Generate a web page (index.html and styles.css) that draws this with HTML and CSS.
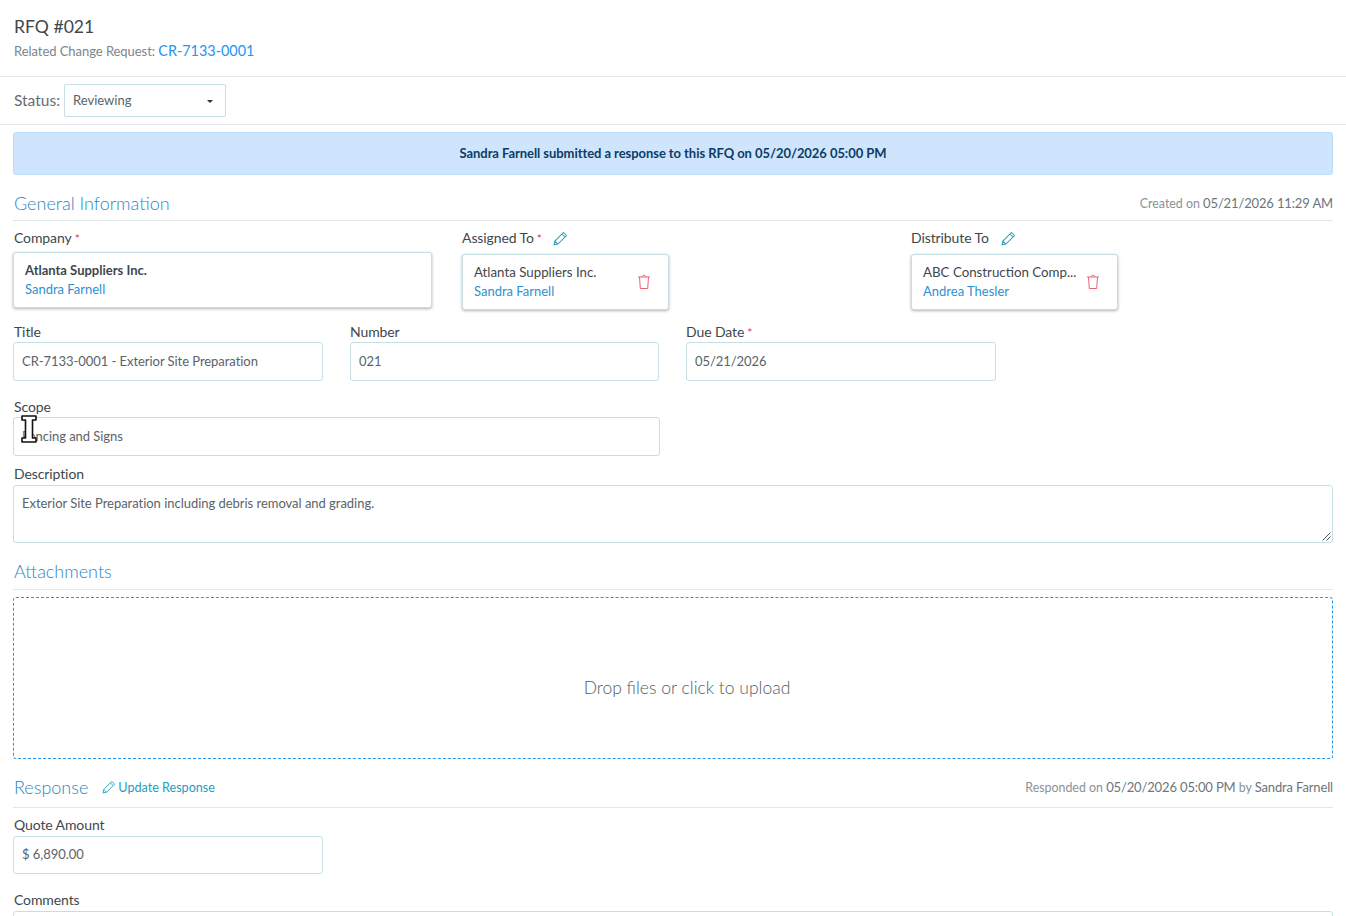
FILE: index.html
```html
<!DOCTYPE html>
<html>
    <head>
        <title>RFQ #021</title>
        <link rel="stylesheet" href="styles.css">
    </head>
    <body>
        <header class='page-head'>
            <h1>RFQ #021</h1>
            <p class='related'>Related Change Request: <a href='#'>CR-7133-0001</a></p>
        </header>
        <div class='status-bar'>
            <label>Status:</label>
            <div class='select'>
                <span>Reviewing</span>
                <i class='caret'></i>
            </div>
        </div>
        <div class='wrapper'>
            <div class='banner'>Sandra Farnell submitted a response to this RFQ on 05/20/2026 05:00 PM</div>

            <div class='section-head general'>
                <h2>General Information</h2>
                <div class='meta'>Created on <b>05/21/2026 11:29 AM</b></div>
            </div>

            <div class='people'>
                <div class='people-col'>
                    <div class='label first'>Company<em>*</em></div>
                    <div class='card card-wide'>
                        <div class='card-text'>
                            <strong>Atlanta Suppliers Inc.</strong>
                            <a href='#'>Sandra Farnell</a>
                        </div>
                    </div>
                </div>
                <div class='people-col'>
                    <div class='label'>Assigned To<em>*</em>
                        <svg class='pencil' viewBox='0 0 16 16'><path d='M11.2 1.6l3.2 3.2-9.2 9.2-4 .8.8-4zM9.6 3.2l3.2 3.2M2 10.8l3.2 3.2'/></svg>
                    </div>
                    <div class='card card-small'>
                        <div class='card-text'>
                            <span class='name'>Atlanta Suppliers Inc.</span>
                            <a href='#'>Sandra Farnell</a>
                        </div>
                        <svg class='trash' viewBox='0 0 14 16'><path d='M1 3h12M5 3c0-2.200 4-2.200 4 0M2.500 3l.8 11.500h7.400l.8-11.500'/></svg>
                    </div>
                </div>
                <div class='people-col'>
                    <div class='label'>Distribute To
                        <svg class='pencil gap' viewBox='0 0 16 16'><path d='M11.2 1.6l3.2 3.2-9.2 9.2-4 .8.8-4zM9.6 3.2l3.2 3.2M2 10.8l3.2 3.2'/></svg>
                    </div>
                    <div class='card card-small'>
                        <div class='card-text'>
                            <span class='name'>ABC Construction Comp...</span>
                            <a href='#'>Andrea Thesler</a>
                        </div>
                        <svg class='trash' viewBox='0 0 14 16'><path d='M1 3h12M5 3c0-2.200 4-2.200 4 0M2.500 3l.8 11.500h7.400l.8-11.500'/></svg>
                    </div>
                </div>
            </div>

            <div class='row3'>
                <div>
                    <div class='label first'>Title</div>
                    <div class='input'>CR-7133-0001 - Exterior Site Preparation</div>
                </div>
                <div>
                    <div class='label'>Number</div>
                    <div class='input'>021</div>
                </div>
                <div>
                    <div class='label'>Due Date<em>*</em></div>
                    <div class='input'>05/21/2026</div>
                </div>
            </div>

            <div class='scope'>
                <div class='label first'>Scope</div>
                <div class='input'>Fencing and Signs</div>
                <svg class='ibeam' viewBox='0 0 16 28'><path d='M1 1h14v4h-3.500v18H15v4H1v-4h3.500V5H1z'/></svg>
            </div>

            <div class='desc'>
                <div class='label first'>Description</div>
                <div class='textarea'>Exterior Site Preparation including debris removal and grading.
                    <svg class='grip' viewBox='0 0 9 9'><path d='M8.500 .5l-8 8M8.500 4.500l-4 4'/></svg>
                </div>
            </div>

            <div class='section-head attach'>
                <h2>Attachments</h2>
            </div>
            <div class='dropzone'>Drop files or click to upload</div>

            <div class='section-head response'>
                <div class='head-left'>
                    <h2>Response</h2>
                    <a href='#' class='update'>
                        <svg viewBox='0 0 16 16'><path d='M11.2 1.6l3.2 3.2-9.2 9.2-4 .8.8-4zM9.6 3.2l3.2 3.2M2 10.8l3.2 3.2'/></svg>
                        Update Response
                    </a>
                </div>
                <div class='meta'>Responded on <b>05/20/2026 05:00 PM</b> by <b>Sandra Farnell</b></div>
            </div>

            <div class='quote'>
                <div class='label first'>Quote Amount</div>
                <div class='input'>$ 6,890.00</div>
            </div>
            <div class='comments'>
                <div class='label first'>Comments</div>
                <div class='textarea'></div>
            </div>
        </div>
    </body>
</html>
```

FILE: styles.css
```css
body{
    margin: 0;
    height: 916px;
    overflow: hidden;
    background-color: #fff;
    font-family: Lato, sans-serif;
    font-size: 13px;
    color: #3f474d;
}
a{
    text-decoration: none;
    color: #2f8fcf;
}
.page-head{
    height: 77px;
    box-sizing: border-box;
    padding: 15px 14px 0;
    border-bottom: 1px solid #e2e8e8;
}
.page-head h1{
    margin: 0;
    font-size: 17.6px;
    line-height: 24px;
    font-weight: 400;
    color: #40474c;
}
.related{
    margin: 3px 0 0;
    font-size: 13px;
    letter-spacing: -.05px;
    line-height: 18px;
    color: #7d858b;
}
.related a{
    font-size: 14.4px;
    letter-spacing: 0;
    color: #2196f3;
}
.status-bar{
    display: flex;
    align-items: center;
    height: 48px;
    box-sizing: border-box;
    padding: 0 14px;
    border-bottom: 1px solid #e2e8e8;
}
.status-bar label{
    font-size: 15.5px;
    color: #646c72;
    margin-right: 4px;
    margin-top: -2px;
}
.select{
    width: 162px;
    height: 33px;
    box-sizing: border-box;
    border: 1px solid #c5dfe2;
    border-radius: 2px;
    padding: 0 12px 0 8px;
    display: flex;
    align-items: center;
    justify-content: space-between;
    font-size: 13px;
    color: #5b6369;
    margin-top: -1px;
}
.caret{
    width: 0;
    height: 0;
    margin-top: 3px;
    border-left: 3px solid transparent;
    border-right: 3px solid transparent;
    border-top: 3px solid #333;
}
.wrapper{
    padding: 7px 13px 0;
}
.banner{
    height: 43px;
    box-sizing: border-box;
    border: 1px solid #bcdcf8;
    border-radius: 3px;
    background-color: #cfe5fd;
    color: #0d3c66;
    font-size: 13px;
    letter-spacing: -.06px;
    font-weight: 700;
    line-height: 41px;
    text-align: center;
}
.section-head{
    display: flex;
    box-sizing: border-box;
    justify-content: space-between;
    align-items: center;
    border-bottom: 1px solid #e2e8e8;
}
.section-head h2{
    margin: 0;
    font-size: 18px;
    font-weight: 300;
    line-height: 24px;
    color: #2a86c4;
    padding-left: 1px;
}
.general{
    margin-top: 16px;
    height: 30px;
    padding-bottom: 5px;
}
.attach{
    margin-top: 16px;
    height: 31px;
    padding-bottom: 6px;
}
.response{
    margin-top: 16px;
    height: 33px;
    padding-bottom: 8px;
}
.head-left{
    display: flex;
    align-items: center;
}
.update{
    display: flex;
    align-items: center;
    margin-left: 14px;
    font-size: 12.6px;
    color: #1f9cc4;
}
.update svg{
    width: 14px;
    height: 14px;
    margin-right: 2px;
    fill: none;
    stroke: #3a9fc4;
    stroke-width: 1.1;
}
.meta{
    font-size: 12.4px;
    color: #8a9197;
}
.meta b{
    font-size: 13px;
    letter-spacing: -.14px;
    font-weight: 400;
    color: #6c757b;
}
.label{
    height: 18px;
    font-size: 14px;
    letter-spacing: -.1px;
    line-height: 18px;
    color: #40474c;
}
.label.first{
    padding-left: 1px;
}
.label em{
    font-style: normal;
    color: #e8305a;
    margin-left: 3px;
    font-size: 12px;
}
.pencil{
    width: 15px;
    height: 15px;
    margin-left: 8px;
    vertical-align: -3px;
    fill: none;
    stroke: #2f9fc0;
    stroke-width: 1.1;
}
.pencil.gap{
    margin-left: 9px;
}
.people{
    display: grid;
    grid-template-columns: 449px 449px 1fr;
    margin-top: 8px;
}
.card{
    box-sizing: border-box;
    background-color: #fff;
    border: 1px solid #c5dfe2;
    border-radius: 3px;
    box-shadow: 0 1px 3px rgba(0,0,0,.3);
    padding: 7px 11px;
    display: flex;
    justify-content: space-between;
    align-items: center;
    line-height: 19px;
}
.card-wide{
    width: 419px;
    height: 56px;
    margin-top: 5px;
}
.card-small{
    width: 207px;
    height: 56px;
    margin-top: 7px;
}
.card-text{
    display: flex;
    flex-direction: column;
    font-size: 13px;
}
.card-text strong{
    font-size: 13px;
    color: #3f474d;
}
.card-text .name{
    font-size: 13.3px;
}
.card-text a{
    color: #2f8fcf;
}
.trash{
    width: 14px;
    height: 16px;
    margin-right: 6px;
    fill: none;
    stroke: #ee6277;
    stroke-width: 1;
}
.row3{
    display: grid;
    grid-template-columns: 310px 309px 310px;
    column-gap: 27px;
    margin-top: 13px;
}
.row3 .label{
    margin-bottom: 1px;
}
.input{
    box-sizing: border-box;
    height: 39px;
    border: 1px solid #c5dfe2;
    border-radius: 3px;
    padding: 0 8px;
    line-height: 37px;
    font-size: 13px;
    letter-spacing: -.05px;
    color: #5b6369;
}
.scope{
    position: relative;
    width: 647px;
    margin-top: 17px;
}
.scope .label{
    margin-bottom: 1px;
}
.ibeam{
    position: absolute;
    left: 8px;
    top: 17px;
    width: 16px;
    height: 28px;
    fill: #fff;
    stroke: #111;
    stroke-width: 1.6;
    stroke-linejoin: round;
}
.desc{
    margin-top: 9px;
}
.desc .label{
    margin-bottom: 2px;
}
.textarea{
    position: relative;
    box-sizing: border-box;
    height: 58px;
    border: 1px solid #c5dfe2;
    border-radius: 3px;
    padding: 8px;
    line-height: 18px;
    font-size: 13px;
    letter-spacing: -.03px;
    color: #5b6369;
}
.grip{
    position: absolute;
    right: 1px;
    bottom: 1px;
    width: 9px;
    height: 9px;
    fill: none;
    stroke: #555;
    stroke-width: 1;
}
.dropzone{
    margin-top: 7px;
    height: 162px;
    box-sizing: border-box;
    border: 1px dashed #2196f3;
    border-radius: 3px;
    padding: 18px 0 0 28px;
    display: flex;
    align-items: center;
    justify-content: center;
    font-size: 17.5px;
    font-weight: 300;
    color: #555d63;
}
.quote{
    margin-top: 8px;
    width: 310px;
}
.quote .label{
    margin-bottom: 2px;
}
.quote .input{
    height: 38px;
    line-height: 35px;
}
.comments{
    margin-top: 17px;
}
.comments .label{
    margin-bottom: 2px;
}
```
